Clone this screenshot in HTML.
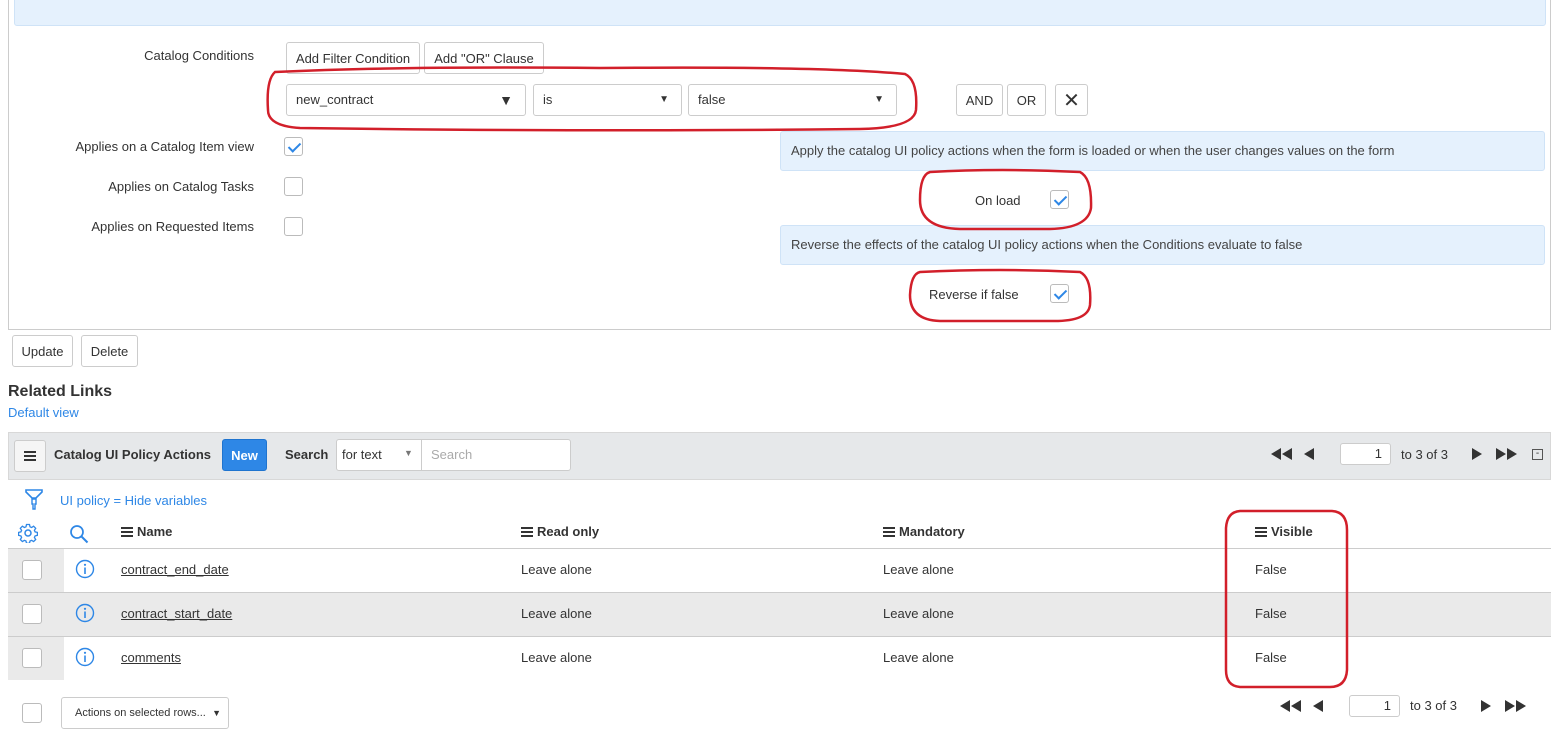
<!DOCTYPE html>
<html><head><meta charset="utf-8"><style>
*{box-sizing:border-box}
body{margin:0;width:1557px;height:745px;overflow:hidden;background:#fff;font-family:"Liberation Sans",Arial,sans-serif;font-size:13px;color:#333;position:relative}
.a{position:absolute}
.btn{position:absolute;border:1px solid #ccc;border-radius:3px;background:#fff;color:#333;font-size:13px;display:flex;align-items:center;justify-content:center}
.sel{position:absolute;border:1px solid #ccc;border-radius:3px;background:#fff;height:32px;padding-left:9px;line-height:30px;font-size:13px}
.sel i{position:absolute;right:12px;top:0;font-style:normal;font-size:10px}
.cb{position:absolute;width:19px;height:19px;border:1px solid #bbb;border-radius:3px;background:#fff}
.cb.on::after{content:"";position:absolute;left:6px;top:2px;width:5px;height:10px;border:solid #2e87e6;border-width:0 2px 2px 0;transform:rotate(45deg)}
.lbl{position:absolute;text-align:right;width:250px}
.info{position:absolute;background:#e5f1fd;border:1px solid #cfe3f7;border-radius:3px;padding-left:10px;line-height:38px;font-size:13px;color:#444}
.row{position:absolute;left:8px;width:1543px;height:44px;border-bottom:1px solid #ccc}
.row .c{position:absolute;top:0;height:43px;line-height:43px}
a{color:#333;text-decoration:underline}
.ham{display:inline-block;width:12px;height:10px;border-top:2px solid #333;border-bottom:2px solid #333;position:relative;vertical-align:-1px;margin-right:4px}
.ham::after{content:"";position:absolute;left:0;right:0;top:2px;border-top:2px solid #333}
.th{position:absolute;top:524px;font-weight:bold;color:#333}
</style></head><body>
<div class="a" style="left:8px;top:-1px;width:1543px;height:331px;border:1px solid #ccc"></div>
<div class="a" style="left:14px;top:-1px;width:1532px;height:27px;background:#e5f1fd;border:1px solid #cfe3f7;border-radius:0 0 3px 3px"></div>

<div class="lbl" style="left:4px;top:48px">Catalog Conditions</div>
<div class="btn" style="left:286px;top:42px;width:134px;height:32px">Add Filter Condition</div>
<div class="btn" style="left:424px;top:42px;width:120px;height:32px">Add "OR" Clause</div>

<div class="sel" style="left:286px;top:84px;width:240px">new_contract<i style="font-size:14px">▼</i></div>
<div class="sel" style="left:533px;top:84px;width:149px">is<i>▼</i></div>
<div class="sel" style="left:688px;top:84px;width:209px">false<i>▼</i></div>
<div class="btn" style="left:956px;top:84px;width:47px;height:32px">AND</div>
<div class="btn" style="left:1007px;top:84px;width:39px;height:32px">OR</div>
<div class="btn" style="left:1055px;top:84px;width:33px;height:32px;font-size:20px">✕</div>

<div class="lbl" style="left:4px;top:139px">Applies on a Catalog Item view</div>
<div class="cb on" style="left:284px;top:137px"></div>
<div class="lbl" style="left:4px;top:179px">Applies on Catalog Tasks</div>
<div class="cb" style="left:284px;top:177px"></div>
<div class="lbl" style="left:4px;top:219px">Applies on Requested Items</div>
<div class="cb" style="left:284px;top:217px"></div>

<div class="info" style="left:780px;top:131px;width:765px;height:40px">Apply the catalog UI policy actions when the form is loaded or when the user changes values on the form</div>
<div class="a" style="left:975px;top:193px">On load</div>
<div class="cb on" style="left:1050px;top:190px"></div>
<div class="info" style="left:780px;top:225px;width:765px;height:40px">Reverse the effects of the catalog UI policy actions when the Conditions evaluate to false</div>
<div class="a" style="left:929px;top:287px">Reverse if false</div>
<div class="cb on" style="left:1050px;top:284px"></div>

<div class="btn" style="left:12px;top:335px;width:61px;height:32px">Update</div>
<div class="btn" style="left:81px;top:335px;width:57px;height:32px">Delete</div>

<div class="a" style="left:8px;top:383px;font-size:16px;font-weight:bold;color:#333">Related Links</div>
<div class="a" style="left:8px;top:405px;font-size:13px;color:#2e87e6">Default view</div>

<div class="a" style="left:8px;top:432px;width:1543px;height:48px;background:#e6e8ea;border:1px solid #d8d8d8"></div>
<div class="btn" style="left:14px;top:440px;width:32px;height:32px;background:#f5f5f5"><span class="ham" style="margin:0"></span></div>
<div class="a" style="left:54px;top:447px;font-weight:bold;color:#333">Catalog UI Policy Actions</div>
<div class="btn" style="left:222px;top:439px;width:45px;height:32px;background:#2e87e6;border-color:#1f74cf;color:#fff;font-weight:bold">New</div>
<div class="a" style="left:285px;top:447px;font-weight:bold">Search</div>
<div class="a" style="left:336px;top:439px;width:235px;height:32px;border:1px solid #ccc;border-radius:3px;background:#fff"></div>
<div class="a" style="left:342px;top:447px">for text</div>
<div class="a" style="left:404px;top:448px;font-size:9px;color:#777">▼</div>
<div class="a" style="left:421px;top:440px;width:1px;height:30px;background:#ccc"></div>
<div class="a" style="left:431px;top:447px;color:#aaa">Search</div>
<svg class="a" style="left:1270px;top:447px" width="56" height="14"><path d="M1 7l10-6v12zM12 7l10-6v12zM34 7l10-6v12z" fill="#333"/></svg>
<div class="a" style="left:1340px;top:443px;width:51px;height:22px;border:1px solid #ccc;border-radius:3px;background:#fff;text-align:right;padding-right:8px;line-height:20px">1</div>
<div class="a" style="left:1401px;top:447px">to 3 of 3</div>
<svg class="a" style="left:1471px;top:447px" width="56" height="14"><path d="M1 1l10 6-10 6zM25 1l10 6-10 6zM36 1l10 6-10 6z" fill="#333"/></svg>
<div class="a" style="left:1532px;top:449px;width:11px;height:11px;border:1px solid #555;font-size:10px;line-height:8px;text-align:center">-</div>

<svg class="a" style="left:24px;top:488px" width="20" height="24" viewBox="0 0 20 24"><path d="M2 2h16v2l-6 6H8L2 4z" fill="none" stroke="#2e87e6" stroke-width="1.6"/><path d="M8 11h4v5h-1v5H9v-5H8z" fill="none" stroke="#2e87e6" stroke-width="1.4"/></svg>
<div class="a" style="left:60px;top:493px;color:#2e87e6">UI policy = Hide variables</div>

<svg class="a" style="left:18px;top:523px" width="20" height="20" viewBox="0 0 20 20"><circle cx="10" cy="10" r="3" fill="none" stroke="#2e87e6" stroke-width="1.5"/><path d="M8.5 1.5h3l.5 2.3 1.6.7 2-1.3 2.1 2.1-1.3 2 .7 1.6 2.3.5v3l-2.3.5-.7 1.6 1.3 2-2.1 2.1-2-1.3-1.6.7-.5 2.3h-3l-.5-2.3-1.6-.7-2 1.3-2.1-2.1 1.3-2-.7-1.6-2.3-.5v-3l2.3-.5.7-1.6-1.3-2 2.1-2.1 2 1.3 1.6-.7z" fill="none" stroke="#2e87e6" stroke-width="1.3"/></svg>
<svg class="a" style="left:68px;top:523px" width="22" height="22" viewBox="0 0 22 22"><circle cx="9" cy="9" r="6" fill="none" stroke="#2e87e6" stroke-width="1.7"/><path d="M13.5 13.5l6 6" stroke="#2e87e6" stroke-width="2"/></svg>
<div class="th" style="left:121px"><span class="ham"></span>Name</div>
<div class="th" style="left:521px"><span class="ham"></span>Read only</div>
<div class="th" style="left:883px"><span class="ham"></span>Mandatory</div>
<div class="th" style="left:1255px"><span class="ham"></span>Visible</div>
<div class="a" style="left:8px;top:548px;width:1543px;height:1px;background:#ccc"></div>

<div class="row" style="top:549px"><div class="c" style="left:0;width:56px;background:#eaeaea"></div></div>
<div class="row" style="top:593px;background:#eaeaea"></div>
<div class="row" style="top:637px;border-bottom:none"><div class="c" style="left:0;width:56px;background:#eaeaea"></div></div>
<div class="cb" style="left:22px;top:560px;width:20px;height:20px"></div>
<div class="cb" style="left:22px;top:604px;width:20px;height:20px"></div>
<div class="cb" style="left:22px;top:648px;width:20px;height:20px"></div>

<svg class="a" style="left:75px;top:559px" width="20" height="20" viewBox="0 0 20 20"><circle cx="10" cy="10" r="8.5" fill="none" stroke="#2e87e6" stroke-width="1.4"/><circle cx="10" cy="5.8" r="1.1" fill="#2e87e6"/><path d="M10 8.5v6.5" stroke="#2e87e6" stroke-width="1.6"/></svg>
<svg class="a" style="left:75px;top:603px" width="20" height="20" viewBox="0 0 20 20"><circle cx="10" cy="10" r="8.5" fill="none" stroke="#2e87e6" stroke-width="1.4"/><circle cx="10" cy="5.8" r="1.1" fill="#2e87e6"/><path d="M10 8.5v6.5" stroke="#2e87e6" stroke-width="1.6"/></svg>
<svg class="a" style="left:75px;top:647px" width="20" height="20" viewBox="0 0 20 20"><circle cx="10" cy="10" r="8.5" fill="none" stroke="#2e87e6" stroke-width="1.4"/><circle cx="10" cy="5.8" r="1.1" fill="#2e87e6"/><path d="M10 8.5v6.5" stroke="#2e87e6" stroke-width="1.6"/></svg>

<div class="a" style="left:121px;top:562px"><a>contract_end_date</a></div>
<div class="a" style="left:121px;top:606px"><a>contract_start_date</a></div>
<div class="a" style="left:121px;top:650px"><a>comments</a></div>
<div class="a" style="left:521px;top:562px">Leave alone</div>
<div class="a" style="left:521px;top:606px">Leave alone</div>
<div class="a" style="left:521px;top:650px">Leave alone</div>
<div class="a" style="left:883px;top:562px">Leave alone</div>
<div class="a" style="left:883px;top:606px">Leave alone</div>
<div class="a" style="left:883px;top:650px">Leave alone</div>
<div class="a" style="left:1255px;top:562px">False</div>
<div class="a" style="left:1255px;top:606px">False</div>
<div class="a" style="left:1255px;top:650px">False</div>

<div class="cb" style="left:22px;top:703px;width:20px;height:20px"></div>
<div class="a" style="left:61px;top:697px;width:168px;height:32px;border:1px solid #ccc;border-radius:3px;font-size:11px;padding-left:13px;line-height:30px">Actions on selected rows...<span style="position:absolute;right:7px;font-size:9px">▼</span></div>
<svg class="a" style="left:1279px;top:699px" width="56" height="14"><path d="M1 7l10-6v12zM12 7l10-6v12zM34 7l10-6v12z" fill="#333"/></svg>
<div class="a" style="left:1349px;top:695px;width:51px;height:22px;border:1px solid #ccc;border-radius:3px;background:#fff;text-align:right;padding-right:8px;line-height:20px">1</div>
<div class="a" style="left:1410px;top:698px">to 3 of 3</div>
<svg class="a" style="left:1480px;top:699px" width="56" height="14"><path d="M1 1l10 6-10 6zM25 1l10 6-10 6zM36 1l10 6-10 6z" fill="#333"/></svg>

<svg class="a" style="left:0;top:0" width="1557" height="745">
<g fill="none" stroke="#d21f2a" stroke-width="2.5">
<path d="M275 72 Q400 66 600 68 Q820 66 905 74 Q918 80 916 110 Q914 128 860 129 Q600 132 300 128 Q268 126 268 110 Q266 80 275 72Z"/>
<path d="M930 172 Q1000 168 1080 172 Q1092 178 1091 208 Q1088 228 1050 229 L960 229 Q920 228 920 200 Q920 175 930 172Z"/>
<path d="M920 272 Q1000 268 1080 272 Q1092 278 1090 305 Q1088 322 1050 321 L940 321 Q910 320 910 295 Q911 274 920 272Z"/>
<path d="M1240 511 L1332 511 Q1347 512 1347 530 L1347 670 Q1346 687 1330 687 L1240 687 Q1226 686 1226 670 L1226 528 Q1227 512 1240 511Z"/>
</g></svg>
</body></html>
